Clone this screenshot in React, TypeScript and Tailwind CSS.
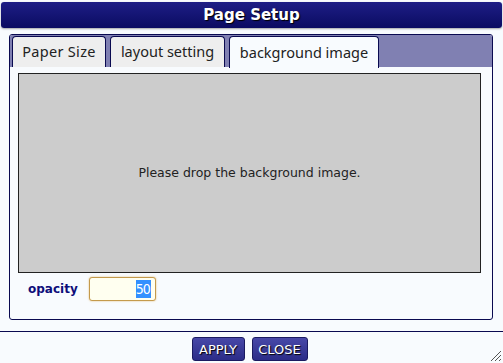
import React from "react";

export default function App() {
  return (
    <div
      className="w-[503px] h-[363px] bg-[#f8fbfe] relative overflow-hidden flex flex-col"
      style={{ fontFamily: '"DejaVu Sans", Verdana, sans-serif' }}
    >
      <div className="mx-[1px] mt-[2px] h-[26px] rounded-[3px] bg-gradient-to-b from-[#1e1e86] to-[#0b0b62] flex items-center justify-center shadow-[0_1px_2px_rgba(0,0,0,0.35)]">
        <span
          className="text-white font-bold text-[15px] leading-none"
          style={{ textShadow: "1px 1px 1px #000" }}
        >
          Page Setup
        </span>
      </div>

      <div className="ml-[9px] mt-[6px] w-[484px] h-[286px] border border-[#0a0a50] rounded-b-[3px] rounded-t-[3px] flex flex-col bg-[#f8fbfe]">
        <div className="h-[32px] bg-[#8080b2] flex items-end pl-[2px] gap-[4px] rounded-t-[2px]">
          <div className="h-[31px] w-[94px] border border-[#0a0a50] border-b-0 rounded-t-[4px] bg-[#eeeeee] flex items-center justify-center text-[14.5px] text-[#222] tracking-[0.3px]" style={{ fontFamily: '"Noto Sans", sans-serif' }}>
            Paper Size
          </div>
          <div className="h-[31px] w-[115px] border border-[#0a0a50] border-b-0 rounded-t-[4px] bg-[#eeeeee] flex items-center justify-center text-[14.5px] text-[#222]" style={{ fontFamily: '"Noto Sans", sans-serif' }}>
            layout setting
          </div>
          <div className="h-[32px] w-[150px] border border-[#0a0a50] border-b-0 rounded-t-[4px] bg-[#f8fbfe] flex items-center justify-center text-[14.5px] text-[#222] -mb-[1px] relative" style={{ fontFamily: '"Noto Sans", sans-serif' }}>
            background image
          </div>
        </div>
        <div className="flex-1 flex flex-col pl-[8px] pt-[6px]">
          <div className="w-[463px] h-[200px] border border-[#222] bg-[#cccccc] flex items-center justify-center text-[12.5px] text-[#222]">
            Please drop the background image.
          </div>
          <div className="flex items-center mt-[3px] h-[26px]">
            <span className="ml-[10px] text-[12px] font-bold text-[#0d0d7a]" style={{ fontFamily: '"DejaVu Sans", sans-serif' }}>opacity</span>
            <div className="ml-[11px] w-[67px] h-[24px] border border-[#c49a4c] rounded-[3px] bg-[#fffff0] shadow-[0_0_2px_#e0b870] flex items-center justify-end pr-[4px]">
              <span className="bg-[#3390ff] text-white text-[14px] leading-[18px] tracking-[-1px] pr-[1px]" style={{ fontFamily: '"DejaVu Sans Condensed", "DejaVu Sans", sans-serif' }}>50</span>
            </div>
          </div>
        </div>
      </div>

      <div className="mt-[11px] h-[1px] w-full bg-[#0a0a50]" />

      <div className="flex justify-center gap-[7px] mt-[5px] pr-[4px]">
        <button className="w-[53px] h-[24px] rounded-[3px] border border-[#1a1a60] bg-gradient-to-b from-[#4848a8] to-[#2c2c88] text-white text-[13px] leading-none" style={{ textShadow: "1px 1px 1px #000" }}>
          APPLY
        </button>
        <button className="w-[56px] h-[24px] rounded-[3px] border border-[#1a1a60] bg-gradient-to-b from-[#4848a8] to-[#2c2c88] text-white text-[13px] leading-none" style={{ textShadow: "1px 1px 1px #000" }}>
          CLOSE
        </button>
      </div>

      <svg className="absolute right-[1px] bottom-[1px]" width="12" height="12" viewBox="0 0 12 12">
        <line x1="11" y1="1" x2="1" y2="11" stroke="#555" strokeWidth="1" />
        <line x1="11" y1="5" x2="5" y2="11" stroke="#555" strokeWidth="1" />
        <line x1="11" y1="9" x2="9" y2="11" stroke="#555" strokeWidth="1" />
      </svg>
    </div>
  );
}
